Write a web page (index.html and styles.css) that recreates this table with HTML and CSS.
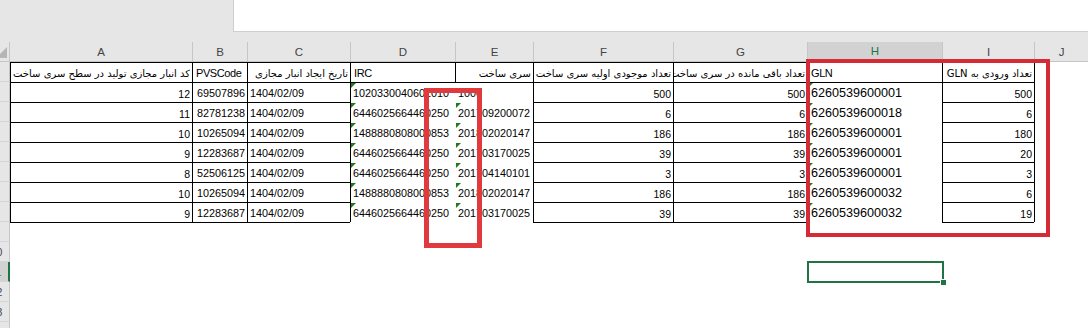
FILE: index.html
```html
<!DOCTYPE html>
<html lang="fa">
<head>
<meta charset="utf-8">
<title>Sheet</title>
<link rel="stylesheet" href="styles.css">
</head>
<body>
<div class="screen">
  <div class="toolbar"><div class="fbar"></div></div>
  <div class="sheet">
    <div class="corner"><span class="tri"></span></div>
    <div class="ch first">A</div>
    <div class="ch">B</div>
    <div class="ch">C</div>
    <div class="ch">D</div>
    <div class="ch">E</div>
    <div class="ch">F</div>
    <div class="ch">G</div>
    <div class="ch csel">H</div>
    <div class="ch">I</div>
    <div class="ch">J</div>

    <div class="rh">1</div>
    <div class="c b fa">کد انبار مجازی تولید در سطح سری ساخت</div>
    <div class="c b lat">PVSCode</div>
    <div class="c b fa">تاریخ ایجاد انبار مجازی</div>
    <div class="c b bb lat">IRC</div>
    <div class="c b bb fa">سری ساخت</div>
    <div class="c b fa">تعداد موجودی اولیه سری ساخت</div>
    <div class="c b fa">تعداد باقی مانده در سری ساخت</div>
    <div class="c b bb lat">GLN</div>
    <div class="c b br fa">تعداد ورودی به GLN</div>
    <div class="c"></div>

    <div class="rh">2</div>
    <div class="c b r">12</div>
    <div class="c b r s11">69507896</div>
    <div class="c b s11">1404/02/09</div>
    <div class="c bl s11 err">1020330040601010</div>
    <div class="c s11">1000</div>
    <div class="c b r">500</div>
    <div class="c b r">500</div>
    <div class="c bl s13 err">6260539600001</div>
    <div class="c b br r">500</div>
    <div class="c"></div>

    <div class="rh">3</div>
    <div class="c b r">11</div>
    <div class="c b r s11">82781238</div>
    <div class="c b s11">1404/02/09</div>
    <div class="c bl s11 err">6446025664460250</div>
    <div class="c s11 err">201709200072</div>
    <div class="c b r">6</div>
    <div class="c b r">6</div>
    <div class="c bl s13 err">6260539600018</div>
    <div class="c b br r">6</div>
    <div class="c"></div>

    <div class="rh">4</div>
    <div class="c b r">10</div>
    <div class="c b r s11">10265094</div>
    <div class="c b s11">1404/02/09</div>
    <div class="c bl s11 err">1488880808000853</div>
    <div class="c s11 err">201802020147</div>
    <div class="c b r">186</div>
    <div class="c b r">186</div>
    <div class="c bl s13 err">6260539600001</div>
    <div class="c b br r">180</div>
    <div class="c"></div>

    <div class="rh">5</div>
    <div class="c b r">9</div>
    <div class="c b r s11">12283687</div>
    <div class="c b s11">1404/02/09</div>
    <div class="c bl s11 err">6446025664460250</div>
    <div class="c s11 err">201703170025</div>
    <div class="c b r">39</div>
    <div class="c b r">39</div>
    <div class="c bl s13 err">6260539600001</div>
    <div class="c b br r">20</div>
    <div class="c"></div>

    <div class="rh">6</div>
    <div class="c b r">8</div>
    <div class="c b r s11">52506125</div>
    <div class="c b s11">1404/02/09</div>
    <div class="c bl s11 err">6446025664460250</div>
    <div class="c s11 err">201704140101</div>
    <div class="c b r">3</div>
    <div class="c b r">3</div>
    <div class="c bl s13 err">6260539600001</div>
    <div class="c b br r">3</div>
    <div class="c"></div>

    <div class="rh">7</div>
    <div class="c b r">10</div>
    <div class="c b r s11">10265094</div>
    <div class="c b s11">1404/02/09</div>
    <div class="c bl s11 err">1488880808000853</div>
    <div class="c s11 err">201802020147</div>
    <div class="c b r">186</div>
    <div class="c b r">186</div>
    <div class="c bl s13 err">6260539600032</div>
    <div class="c b br r">6</div>
    <div class="c"></div>

    <div class="rh">8</div>
    <div class="c b bb r">9</div>
    <div class="c b bb r s11">12283687</div>
    <div class="c b bb s11">1404/02/09</div>
    <div class="c bl s11 err">6446025664460250</div>
    <div class="c s11 err">201703170025</div>
    <div class="c b bb r">39</div>
    <div class="c b bb r">39</div>
    <div class="c bl s13 err">6260539600032</div>
    <div class="c b bb br r">19</div>
    <div class="c"></div>

    <div class="rh">9</div><div class="blank"></div>
    <div class="rh">10</div><div class="blank"></div>
    <div class="rh rsel">11</div><div class="blank"></div>
    <div class="rh">12</div><div class="blank"></div>
    <div class="rh">13</div><div class="blank"></div>
    <div class="rh">14</div><div class="blank"></div>
  </div>

  <div class="mark mark-irc"></div>
  <div class="mark mark-gln"></div>
  <div class="cursor"><span class="handle"></span></div>
</div>
</body>
</html>
```

FILE: styles.css
```css
* {
  box-sizing: border-box;
  margin: 0;
  padding: 0;
}

html,
body {
  width: 1088px;
  height: 328px;
  overflow: hidden;
  background: #fff;
}

body {
  font-family: "Liberation Sans", Arial, sans-serif;
  color: #000;
}

.screen {
  position: relative;
  width: 1088px;
  height: 328px;
  overflow: hidden;
}

.toolbar {
  display: flex;
  height: 42px;
  background: #e6e6e6;
}

.fbar {
  flex: 1;
  margin-left: 233px;
  height: 32px;
  background: #fff;
  border-left: 1px solid #cfcfcf;
  border-bottom: 1px solid #cfcfcf;
}

.sheet {
  display: grid;
  grid-template-columns: 26px 182px 55px 103px 105px 78px 140px 134px 135px 92px 1fr;
  grid-auto-rows: 20px;
  width: 1104px;
  margin-left: -16px;
}

.corner {
  display: flex;
  align-items: flex-end;
  justify-content: flex-end;
  padding: 0 2px 3px 0;
  background: #e6e6e6;
  border-right: 1px solid #c6c6c6;
  border-bottom: 1px solid #c6c6c6;
}

.tri {
  width: 0;
  height: 0;
  border-left: 11px solid transparent;
  border-bottom: 11px solid #b5b5b5;
}

.ch {
  display: flex;
  align-items: center;
  justify-content: center;
  background: #e6e6e6;
  border-left: 1px solid #c6c6c6;
  border-bottom: 1px solid #c6c6c6;
  color: #444;
  font-size: 11.5px;
}

.ch.first {
  border-left: none;
}

.ch.csel {
  background: #d2d2d2;
  color: #217346;
  border-bottom: 2px solid #217346;
}

.rh {
  display: flex;
  align-items: center;
  justify-content: center;
  background: #e6e6e6;
  border-right: 1px solid #c6c6c6;
  border-bottom: 1px solid #d4d4d4;
  color: #444;
  font-size: 10.5px;
}

.rh.rsel {
  background: #d2d2d2;
  color: #217346;
  border-right: 2px solid #217346;
}

.blank {
  grid-column: 2 / -1;
}

.c {
  --bt: 0 0 0 0 transparent;
  --bl: 0 0 0 0 transparent;
  --bb: 0 0 0 0 transparent;
  --br: 0 0 0 0 transparent;
  position: relative;
  display: flex;
  align-items: flex-end;
  padding: 0 2px 3px 3px;
  overflow: hidden;
  white-space: nowrap;
  font-size: 10.5px;
  line-height: 1;
  box-shadow: var(--bt), var(--bl), var(--bb), var(--br);
}

.b {
  --bt: inset 0 1px 0 #000;
  --bl: inset 1px 0 0 #000;
}

.bl {
  --bl: inset 1px 0 0 #000;
}

.bb {
  --bb: 0 1px 0 #000;
}

.br {
  --br: 1px 0 0 #000;
}

.r {
  justify-content: flex-end;
}

.s11 {
  font-size: 10.8px;
}

.s13 {
  font-size: 12.6px;
  padding-bottom: 2px;
  padding-left: 4px;
}

.lat {
  font-size: 11px;
  letter-spacing: -0.4px;
  padding-left: 4px;
}

.fa {
  direction: rtl;
  font-family: "DejaVu Sans", sans-serif;
  font-size: 10px;
}

.err::before {
  content: "";
  position: absolute;
  left: 1px;
  top: 1px;
  border-top: 5px solid #1f7a1f;
  border-right: 5px solid transparent;
}

.mark {
  position: absolute;
}

.mark-irc {
  left: 424px;
  top: 88px;
  width: 58px;
  height: 160px;
  border: 5px solid #e03a3e;
}

.mark-gln {
  left: 806px;
  top: 59px;
  width: 244px;
  height: 178px;
  border: 4px solid #d52b37;
}

.cursor {
  position: absolute;
  left: 807px;
  top: 261px;
  width: 137px;
  height: 22px;
  border: 2px solid #217346;
}

.handle {
  position: absolute;
  right: -5px;
  bottom: -5px;
  width: 7px;
  height: 7px;
  background: #217346;
  border: 1px solid #fff;
}
```
